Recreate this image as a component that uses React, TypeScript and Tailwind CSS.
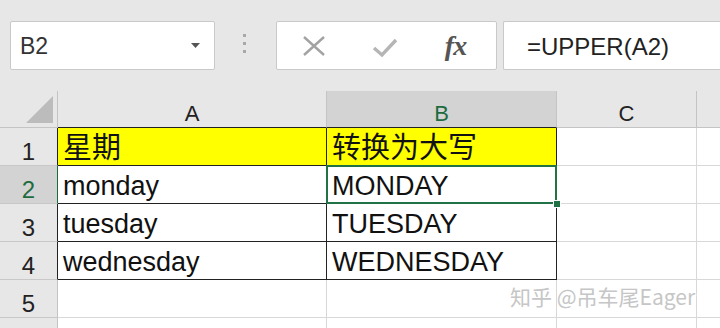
import React from "react";

const FONT = {
  fontFamily: '"Liberation Sans", "Noto Sans CJK SC", sans-serif',
};

type Cell = { text?: string; yellow?: boolean; box?: boolean };

const rows: Cell[][] = [
  [{ text: "星期", yellow: true, box: true }, { text: "转换为大写", yellow: true, box: true }],
  [{ text: "monday", box: true }, { text: "MONDAY", box: true }],
  [{ text: "tuesday", box: true }, { text: "TUESDAY", box: true }],
  [{ text: "wednesday", box: true }, { text: "WEDNESDAY", box: true }],
  [{}, {}],
  [{}, {}],
];

function Toolbar() {
  return (
    <div className="h-[91px] flex items-start pt-[21px] pl-[10px]">
      <div className="w-[205px] h-[49px] bg-white border border-[#c9c9c9] rounded-[2px] flex items-center justify-between pl-[9px] pr-[14px]">
        <span className="text-[23px] leading-none pt-[2px] text-[#333]">B2</span>
        <svg width="9" height="5" viewBox="0 0 9 5">
          <path d="M0 0 L9 0 L4.5 5 Z" fill="#555" />
        </svg>
      </div>
      <div className="ml-[28px] mt-[13px] flex flex-col gap-[5px]">
        <span className="block w-[3px] h-[3px] bg-[#a8a8a8]" />
        <span className="block w-[3px] h-[3px] bg-[#a8a8a8]" />
        <span className="block w-[3px] h-[3px] bg-[#a8a8a8]" />
      </div>
      <div className="ml-[30px] w-[221px] h-[49px] bg-white border border-[#c9c9c9] rounded-[2px] flex items-center">
        <div className="w-[72px] flex justify-center pl-[2px]">
          <svg width="24" height="20" viewBox="0 0 24 20">
            <path d="M2 1 L22 19 M22 1 L2 19" stroke="#a3a3a3" strokeWidth="2.4" />
          </svg>
        </div>
        <div className="w-[72px] flex justify-center pt-[4px]">
          <svg width="26" height="20" viewBox="0 0 26 20">
            <path d="M2 10 L10 17 L24 2" stroke="#b5b5b5" strokeWidth="3.4" fill="none" />
          </svg>
        </div>
        <div className="flex-1 flex justify-center pr-[6px]">
          <span
            className="italic font-bold text-[28px] leading-none text-[#555] tracking-[-1px]"
            style={{ fontFamily: '"Liberation Serif", serif' }}
          >
            fx
          </span>
        </div>
      </div>
      <div className="ml-[6px] flex-1 h-[49px] bg-white border border-[#c9c9c9] border-r-0 rounded-l-[2px] flex items-center pl-[23px]">
        <span className="text-[24px] leading-none pt-[3px] text-[#222]">=UPPER(A2)</span>
      </div>
    </div>
  );
}

export default function App() {
  return (
    <div className="w-[720px] h-[328px] overflow-hidden bg-[#e7e7e7] relative" style={FONT}>
      <Toolbar />
      <div className="grid grid-cols-[58px_269px_230px_140px_1fr] grid-rows-[37px_38px_38px_38px_38px_38px_38px]">
        {/* header row */}
        <div className="border-r border-b border-[#c4c4c4] flex items-end justify-end pr-[4px] pb-[4px]">
          <svg width="27" height="27" viewBox="0 0 27 27">
            <path d="M27 0 L27 27 L0 27 Z" fill="#bcbcbc" />
          </svg>
        </div>
        <div className="border-r border-r-[#c4c4c4] border-b border-b-[#222] flex items-center justify-center pt-[10px] text-[22px] leading-none text-[#222]">
          A
        </div>
        <div className="bg-[#d3d3d3] border-r border-r-[#c4c4c4] border-b border-b-[#222] flex items-center justify-center pt-[10px] text-[22px] leading-none text-[#1f6b40]">
          B
        </div>
        <div className="border-r border-b border-[#c4c4c4] flex items-center justify-center pt-[10px] text-[22px] leading-none text-[#222]">
          C
        </div>
        <div className="border-b border-[#c4c4c4]" />

        {rows.map((r, i) => {
          const sel = i === 1;
          return (
            <React.Fragment key={i}>
              <div
                className={
                  "border-b border-b-[#c8c8c8] border-r flex items-center justify-center pt-[10px] text-[24px] leading-none " +
                  (sel
                    ? "bg-[#d3d3d3] text-[#1f6b40] border-r-[#1f6b40]"
                    : i < 4
                    ? "text-[#222] border-r-[#222]"
                    : "text-[#222] border-r-[#c4c4c4]")
                }
              >
                {i < 5 ? i + 1 : ""}
              </div>
              {r.map((c, j) => (
                <div
                  key={j}
                  className={
                    "relative border-r border-b whitespace-nowrap pl-[5px] pt-[2px] leading-[36px] text-[#111] " +
                    (c.yellow ? "text-[29px] " : "text-[27px] ") +
                    (c.box ? "border-[#222] " : "border-[#d8d8d8] ") +
                    (c.yellow ? "bg-[#ffff00]" : "bg-white")
                  }
                >
                  {c.text}
                  {sel && j === 1 && (
                    <>
                      <div className="absolute z-10 -left-px -top-px -right-px -bottom-px border-2 border-[#217346]" />
                      <div className="absolute z-20 -right-[5px] -bottom-[5px] w-[8px] h-[8px] bg-[#217346] border border-white" />
                    </>
                  )}
                </div>
              ))}
              <div className="bg-white border-r border-b border-[#d8d8d8]" />
              <div className="bg-white border-b border-[#d8d8d8]" />
            </React.Fragment>
          );
        })}
      </div>
      <div
        className="absolute left-[510px] top-[281px] text-[21px] text-[#c6c6c6] whitespace-nowrap"
        style={{ textShadow: "1px 1px 0 #ffffff", fontFamily: '"Noto Sans CJK SC", sans-serif' }}
      >
        知乎 @吊车尾Eager
      </div>
    </div>
  );
}
